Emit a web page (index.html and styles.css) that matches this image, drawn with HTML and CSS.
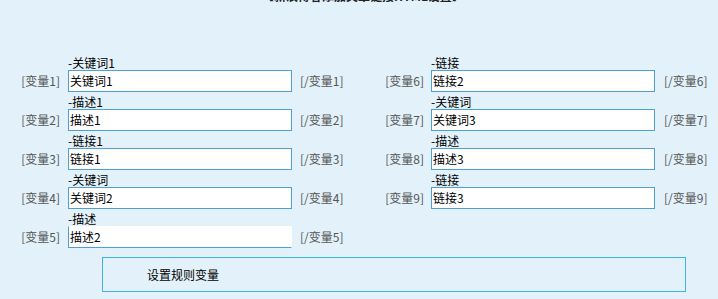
FILE: index.html
```html
<!DOCTYPE html>
<html lang="zh">
<head>
<meta charset="utf-8">
<link rel="stylesheet" href="styles.css">
</head>
<body>
<div class="page">
  <div class="title">【新浪博客添加文章链接HTML设置】</div>
  <div class="cols">
    <div class="col col-left">
      <div class="field"><span class="open">[变量1]</span><div class="box"><div class="cap">-关键词1</div><div class="inp">关键词1</div></div><span class="close">[/变量1]</span></div>
      <div class="field"><span class="open">[变量2]</span><div class="box"><div class="cap">-描述1</div><div class="inp">描述1</div></div><span class="close">[/变量2]</span></div>
      <div class="field"><span class="open">[变量3]</span><div class="box"><div class="cap">-链接1</div><div class="inp">链接1</div></div><span class="close">[/变量3]</span></div>
      <div class="field"><span class="open">[变量4]</span><div class="box"><div class="cap">-关键词</div><div class="inp">关键词2</div></div><span class="close">[/变量4]</span></div>
      <div class="field"><span class="open">[变量5]</span><div class="box"><div class="cap">-描述</div><div class="inp inp-open">描述2</div></div><span class="close">[/变量5]</span></div>
    </div>
    <div class="col col-right">
      <div class="field"><span class="open">[变量6]</span><div class="box"><div class="cap">-链接</div><div class="inp">链接2</div></div><span class="close">[/变量6]</span></div>
      <div class="field"><span class="open">[变量7]</span><div class="box"><div class="cap">-关键词</div><div class="inp">关键词3</div></div><span class="close">[/变量7]</span></div>
      <div class="field"><span class="open">[变量8]</span><div class="box"><div class="cap">-描述</div><div class="inp">描述3</div></div><span class="close">[/变量8]</span></div>
      <div class="field"><span class="open">[变量9]</span><div class="box"><div class="cap">-链接</div><div class="inp">链接3</div></div><span class="close">[/变量9]</span></div>
    </div>
  </div>
  <div class="action">
    <button class="btn" type="button">设置规则变量</button>
  </div>
</div>
</body>
</html>
```
FILE: styles.css
```css
* { box-sizing: border-box; }
html, body {
  margin: 0;
  padding: 0;
  background: #e3f2fa;
  height: 100%;
  overflow: hidden;
}
body {
  font-family: "Noto Sans CJK SC", "Liberation Sans", sans-serif;
  font-size: 12px;
  color: #000;
}
.page {
  width: 718px;
}
.title {
  margin-top: -11px;
  height: 14px;
  line-height: 14px;
  text-align: center;
  padding-left: 8px;
  font-weight: bold;
  color: #222;
}
.cols {
  display: flex;
  margin-top: 54px;
}
.col {
  display: flex;
  flex-direction: column;
  gap: 4px;
}
.col-left { width: 360px; }
.col-right { width: 358px; }
.field {
  display: grid;
  align-items: end;
}
.col-left .field { grid-template-columns: 68px 224px auto; }
.col-right .field { grid-template-columns: 71px 224px auto; }
.open, .close {
  color: #555;
  height: 22px;
  line-height: 22px;
  white-space: nowrap;
}
.open {
  text-align: right;
  padding-right: 8px;
}
.col-right .open { padding-right: 7px; }
.close { padding-left: 8px; }
.col-right .close { padding-left: 9px; }
.cap {
  height: 13px;
  line-height: 11px;
  white-space: nowrap;
}
.inp {
  height: 22px;
  line-height: 20px;
  border: 1px solid #4f9fd6;
  background: #fff;
  padding-left: 1px;
  white-space: nowrap;
}
.inp-open {
  border-top-color: #fff;
  border-right-color: #fff;
}
.action {
  padding: 9px 0 0 102px;
}
.btn {
  display: block;
  width: 584px;
  height: 35px;
  margin: 0;
  padding: 0 0 0 44px;
  text-align: left;
  font: inherit;
  font-size: 12px;
  color: #000;
  background: #e3f2fa;
  border: 1px solid #3fb2e6;
  border-radius: 0;
}
```
